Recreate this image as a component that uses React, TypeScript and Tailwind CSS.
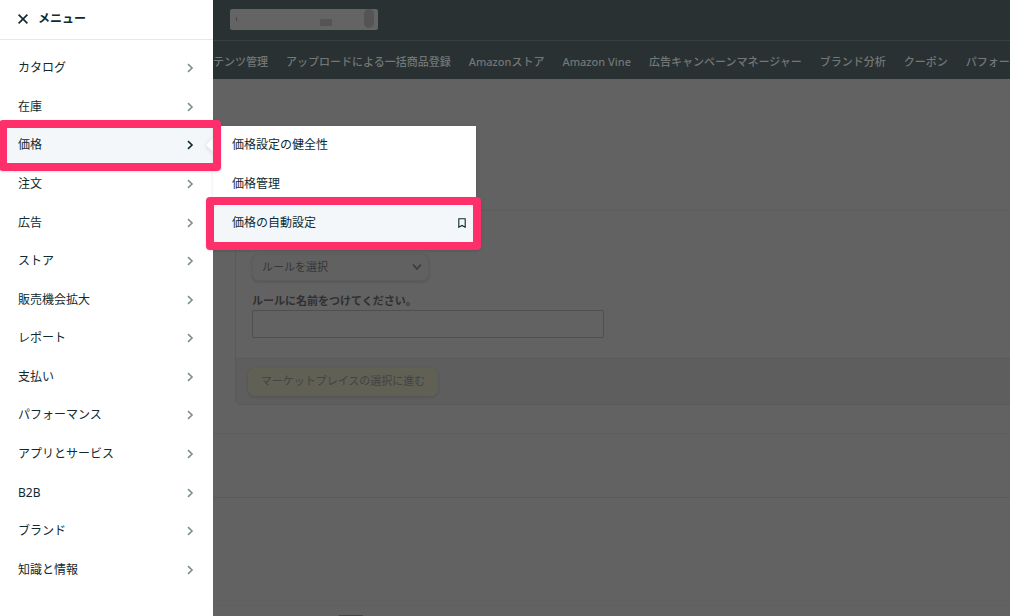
import React from 'react';

const menuItems = [
  'カタログ', '在庫', '価格', '注文', '広告', 'ストア', '販売機会拡大', 'レポート',
  '支払い', 'パフォーマンス', 'アプリとサービス', 'B2B', 'ブランド', '知識と情報',
];

const submenuItems = ['価格設定の健全性', '価格管理', '価格の自動設定'];

const favorites = [
  'テンツ管理', 'アップロードによる一括商品登録', 'Amazonストア', 'Amazon Vine',
  '広告キャンペーンマネージャー', 'ブランド分析', 'クーポン', 'パフォー',
];

function Chevron({ active }: { active: boolean }) {
  return (
    <svg viewBox="0 0 8 10" className={`h-2.5 w-2 ${active ? 'text-[#0f2a30]' : 'text-[#7f8e92]'}`} fill="none" stroke="currentColor" strokeWidth="1.6" aria-hidden="true">
      <path d="M2 1.2 6 5 2 8.8" />
    </svg>
  );
}

function Submenu() {
  return (
    <ul className="absolute top-0 left-full grid h-[300%] w-[263px] grid-rows-3 bg-white shadow-sm">
      {submenuItems.map((label, i) => {
        const marked = i === 2;
        return (
          <li key={label} className="relative">
            <a href="#" className={`flex h-full items-center justify-between pr-2.5 pl-[19px] ${marked ? 'bg-[#f3f7f9]' : ''}`}>
              {label}
              {marked && (
                <svg viewBox="0 0 8 10" className="h-2.5 w-2" fill="none" stroke="currentColor" strokeWidth="1.1" aria-hidden="true">
                  <path d="M.8.7h6.4v8.5L4 7.4.8 9.2z" />
                </svg>
              )}
            </a>
            {marked && (
              <span className="pointer-events-none absolute -top-1.5 -right-[5px] -bottom-2 -left-[7px] rounded-sm border-8 border-[#ff2f6b] shadow-sm" />
            )}
          </li>
        );
      })}
    </ul>
  );
}

function Drawer() {
  return (
    <aside className="relative z-10 flex w-[213px] shrink-0 flex-col bg-white text-xs text-[#0f2a30]">
      <div className="flex h-10 items-center gap-2.5 border-b border-[#e6e9ea] pb-0.5 pl-[18px]">
        <button type="button" aria-label="閉じる">
          <svg viewBox="0 0 10 10" className="size-2.5" fill="none" stroke="currentColor" strokeWidth="1.6" aria-hidden="true">
            <path d="m.6.6 8.8 8.8M9.4.6.6 9.4" />
          </svg>
        </button>
        <h2 className="font-bold">メニュー</h2>
      </div>
      <ul className="flex flex-1 flex-col pt-[9px] pb-[27px]">
        {menuItems.map((label) => {
          const active = label === '価格';
          return (
            <li key={label} className="relative flex-1">
              <a href="#" className={`flex h-full items-center justify-between pr-[19px] pl-[18px] ${active ? 'bg-[#f3f7f9]' : ''}`}>
                {label}
                <Chevron active={active} />
              </a>
              {active && (
                <>
                  <svg viewBox="0 0 7 14" className="absolute top-3 right-0 h-3.5 w-[7px] drop-shadow-sm" aria-hidden="true">
                    <path d="M7 0v14L0 7z" fill="#fff" />
                  </svg>
                  <Submenu />
                  <span className="pointer-events-none absolute -top-1.5 -right-2 -bottom-1.5 -left-px rounded-sm border-8 border-[#ff2f6b] shadow-sm" />
                </>
              )}
            </li>
          );
        })}
      </ul>
    </aside>
  );
}

function Header() {
  return (
    <header className="bg-[#293132]">
      <div className="flex h-[41px] items-center border-b border-[#364041] pb-0.5 pl-[17px]">
        <button type="button" aria-label="アカウント" className="flex h-[21px] w-[148px] items-stretch rounded-xs bg-[#646464] pr-1 pl-1.5">
          <span className="mt-2 h-1 w-px bg-[#494646]" />
          <span className="mt-2.5 mb-1 ml-auto w-3 bg-[#555555]" />
          <span className="mb-0.5 ml-8 w-2.5 rounded-full bg-[#545454]" />
        </button>
      </div>
      <nav className="flex h-[38px] items-center gap-[18px] overflow-hidden pt-1 text-[11px] font-medium whitespace-nowrap text-[#727777]">
        {favorites.map((label) => (
          <a key={label} href="#" className="shrink-0">{label}</a>
        ))}
      </nav>
    </header>
  );
}

function RuleForm() {
  return (
    <section className="border-y border-[#5d5d5d] pt-6 pb-7 pl-[22px]">
      <form className="rounded-bl-md border-b border-l border-[#5a5a5a]">
        <div className="flex flex-col items-start px-4 pt-[18px] pb-5">
          <div className="relative w-[177px]">
            <select aria-label="ルールを選択" className="h-[27px] w-full appearance-none rounded-md border border-[#5c5c5c] bg-[#616161] px-[9px] pb-px text-[11px] text-[#363636] shadow-sm">
              <option>ルールを選択</option>
            </select>
            <svg viewBox="0 0 10 8" className="pointer-events-none absolute top-2.5 right-[7px] h-2 w-2.5" fill="none" stroke="#3b3b3b" strokeWidth="1.7" aria-hidden="true">
              <path d="M1 1.5 5 6l4-4.5" />
            </svg>
          </div>
          <label htmlFor="rule-name" className="mt-3 h-[17px] text-[11px] leading-4 font-bold text-[#303030]">ルールに名前をつけてください。</label>
          <input id="rule-name" type="text" className="h-7 w-[352px] rounded-xs border border-[#4f4f4f] bg-[#626262]" />
        </div>
        <div className="rounded-bl-md border-t border-[#5a5a5a] bg-[#5e5e5e] px-3 py-2">
          <button type="button" className="h-7 w-[190px] rounded-md border border-[#606053] bg-[#606055] text-[11px] text-[#434343] shadow-sm">
            マーケットプレイスの選択に進む
          </button>
        </div>
      </form>
    </section>
  );
}

export default function App() {
  return (
    <div className="flex min-h-screen overflow-hidden bg-[#626262] font-['Noto_Sans','Noto_Sans_CJK_JP',sans-serif]">
      <Drawer />
      <div className="flex min-w-0 flex-1 flex-col">
        <Header />
        <main className="flex flex-1 flex-col pt-[131px]">
          <RuleForm />
          <div className="h-16 border-b border-[#5a5a5a]" />
          <div className="flex-1" />
          <footer className="flex h-[11px] items-end border-t border-[#5f5f5f] pl-[126px]">
            <span className="h-px w-6 bg-[#444444]" />
          </footer>
        </main>
      </div>
    </div>
  );
}
